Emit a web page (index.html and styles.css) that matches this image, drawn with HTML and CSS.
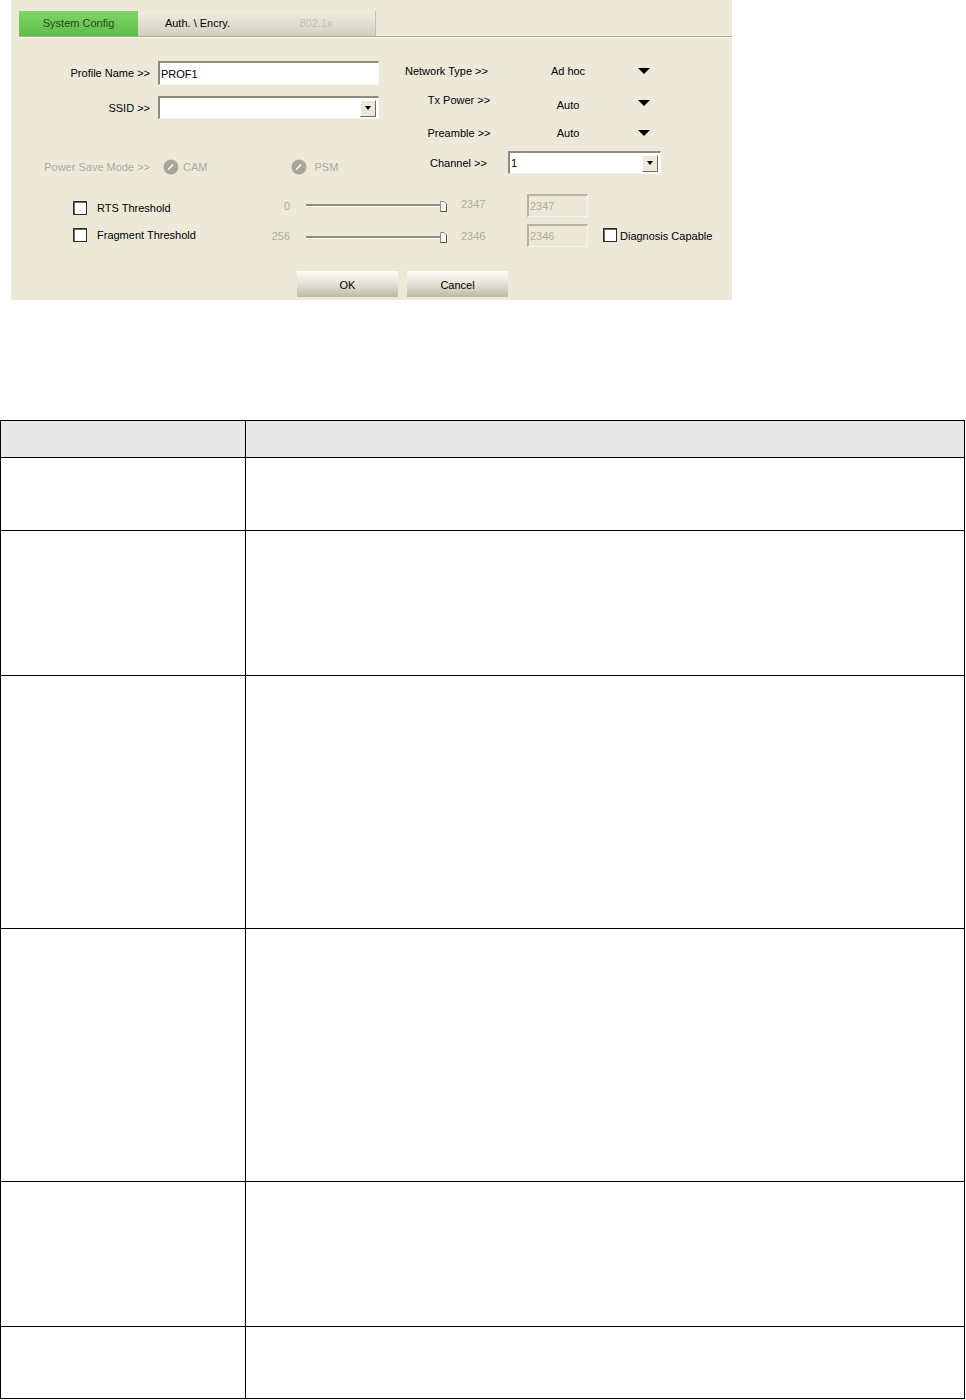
FILE: index.html
```html
<!DOCTYPE html>
<html lang="en">
<head>
    <meta charset="UTF-8">
    <meta name="viewport" content="width=device-width, initial-scale=1.0">
    <title>System Config</title>
    <link rel="stylesheet" href="styles.css">
</head>
<body>
    <div class="panel">
        <div class="tabs">
            <div class="tab tab-on">System Config</div>
            <div class="tab">Auth. \ Encry.</div>
            <div class="tab tab-off">802.1x</div>
        </div>

        <div class="top">
            <div class="left">
                <div class="row r-profile">
                    <span class="lbl">Profile Name &gt;&gt;</span>
                    <div class="textbox wide">PROF1</div>
                </div>
                <div class="row r-ssid">
                    <span class="lbl">SSID &gt;&gt;</span>
                    <div class="textbox wide combo">
                        <span class="combo-text"></span>
                        <span class="combo-btn"><i></i></span>
                    </div>
                </div>
                <div class="row r-power dis">
                    <span class="lbl">Power Save Mode &gt;&gt;</span>
                    <svg class="radio cam" width="16" height="16" viewBox="0 0 16 16"><circle cx="8" cy="8" r="7.5" fill="#a9a696"/><line x1="5.5" y1="10.2" x2="9.8" y2="6" stroke="#fff" stroke-width="1.6" stroke-linecap="round"/></svg>
                    <span class="rtext">CAM</span>
                    <svg class="radio psm" width="16" height="16" viewBox="0 0 16 16"><circle cx="8" cy="8" r="7.5" fill="#a9a696"/><line x1="5.5" y1="10.2" x2="9.8" y2="6" stroke="#fff" stroke-width="1.6" stroke-linecap="round"/></svg>
                    <span class="rtext psm-text">PSM</span>
                </div>
            </div>

            <div class="right">
                <div class="rrow r-net">
                    <span class="rlbl net">Network Type &gt;&gt;</span>
                    <span class="val">Ad hoc</span>
                    <span class="arrow"></span>
                </div>
                <div class="rrow r-tx">
                    <span class="rlbl">Tx Power &gt;&gt;</span>
                    <span class="val">Auto</span>
                    <span class="arrow"></span>
                </div>
                <div class="rrow r-pre">
                    <span class="rlbl">Preamble &gt;&gt;</span>
                    <span class="val">Auto</span>
                    <span class="arrow"></span>
                </div>
                <div class="rrow r-channel">
                    <span class="rlbl ch">Channel &gt;&gt;</span>
                    <div class="textbox combo ch-box">
                        <span class="combo-text">1</span>
                        <span class="combo-btn"><i></i></span>
                    </div>
                </div>
            </div>
        </div>

        <div class="thresh">
            <div class="trow t-rts">
                <span class="check"></span>
                <span class="tlbl">RTS Threshold</span>
                <span class="num">0</span>
                <div class="slider">
                    <div class="track"></div>
                    <svg width="7" height="12" viewBox="0 0 7 12"><path d="M0.5 1.5 H4 L6.5 4 V11.5 H0.5 Z" fill="#f7f6f0" stroke="#8e8c7c"/><path d="M6.5 4 V11.5 H0.5" fill="none" stroke="#55544a"/></svg>
                </div>
                <span class="max">2347</span>
                <div class="textbox small">2347</div>
            </div>
            <div class="trow t-frag">
                <span class="check"></span>
                <span class="tlbl">Fragment Threshold</span>
                <span class="num">256</span>
                <div class="slider">
                    <div class="track"></div>
                    <svg width="7" height="12" viewBox="0 0 7 12"><path d="M0.5 1.5 H4 L6.5 4 V11.5 H0.5 Z" fill="#f7f6f0" stroke="#8e8c7c"/><path d="M6.5 4 V11.5 H0.5" fill="none" stroke="#55544a"/></svg>
                </div>
                <span class="max">2346</span>
                <div class="textbox small">2346</div>
                <span class="check diag"></span>
                <span class="diag-lbl">Diagnosis Capable</span>
            </div>
        </div>

        <div class="buttons">
            <button>OK</button>
            <button>Cancel</button>
        </div>
    </div>

    <table>
        <tr class="head"><td class="c1"></td><td></td></tr>
        <tr class="h1"><td class="c1"></td><td></td></tr>
        <tr class="h2"><td class="c1"></td><td></td></tr>
        <tr class="h3"><td class="c1"></td><td></td></tr>
        <tr class="h3"><td class="c1"></td><td></td></tr>
        <tr class="h2"><td class="c1"></td><td></td></tr>
        <tr class="h4"><td class="c1"></td><td></td></tr>
    </table>
</body>
</html>
```

FILE: styles.css
```css
* {
    box-sizing: border-box;
}

body {
    margin: 0;
    background: #fff;
    font-family: "Liberation Sans", Arial, sans-serif;
    font-size: 11px;
    color: #000;
}

.panel {
    margin-left: 11px;
    width: 721px;
    height: 300px;
    background: #ece9d8;
}

/* tabs */
.tabs {
    display: flex;
    margin-left: 8px;
    padding-top: 11px;
    height: 37px;
    border-bottom: 1px solid #b0ad98;
    box-shadow: 0 1px 0 #fbfaf5;
}

.tab {
    width: 119px;
    height: 25px;
    line-height: 24px;
    text-align: center;
    background: linear-gradient(#efede3, #d3cfbf);
}

.tab:last-child {
    border-right: 1px solid #c4c0ad;
}

.tab-on {
    background: linear-gradient(#7fd567, #5dbd47);
    color: #244d16;
}

.tab-off {
    color: #c2bfb0;
}

/* top block */
.top {
    display: flex;
    gap: 26px;
}

.left {
    width: 368px;
}

.row {
    display: flex;
    align-items: center;
}

.lbl {
    width: 139px;
    margin-right: 8px;
    text-align: right;
}

.r-profile {
    margin-top: 24px;
    height: 24px;
}

.r-ssid {
    margin-top: 11px;
    height: 23px;
}

.r-power {
    margin-top: 38px;
    height: 20px;
}

.dis {
    color: #aeab9c;
}

.r-power .lbl {
    margin-right: 13px;
}

.rtext {
    margin-left: 4px;
}

.radio.psm {
    margin-left: 84px;
}

.psm-text {
    margin-left: 7px;
}

.textbox {
    display: flex;
    align-items: center;
    height: 100%;
    background: #fff;
    border-top: 2px solid #8d8b7f;
    border-left: 2px solid #8d8b7f;
    border-right: 1px solid #f6f5f0;
    border-bottom: 1px solid #f6f5f0;
    padding-left: 1px;
}

.wide {
    width: 221px;
}

.combo {
    justify-content: space-between;
    padding-right: 2px;
}

.combo-btn {
    width: 16px;
    height: 17px;
    display: flex;
    align-items: center;
    justify-content: center;
    background: #ece9d8;
    border-top: 1px solid #fff;
    border-left: 1px solid #fff;
    border-right: 1px solid #6f6d62;
    border-bottom: 1px solid #6f6d62;
}

.combo-btn i {
    width: 0;
    height: 0;
    border-left: 3.5px solid transparent;
    border-right: 3.5px solid transparent;
    border-top: 4px solid #000;
}

/* right block */
.right {
    padding-top: 19px;
}

.rrow {
    display: flex;
    align-items: center;
    height: 31px;
}

.rlbl {
    width: 108px;
    text-align: center;
}

.rlbl.net {
    text-align: left;
}

.r-net {
    padding-bottom: 2px;
}

.r-tx .rlbl {
    margin-bottom: 5px;
}

.r-tx .val {
    margin-top: 4px;
}

.r-pre {
    padding-bottom: 1px;
}

.val {
    width: 110px;
    text-align: center;
}

.arrow {
    margin-left: 15px;
    width: 0;
    height: 0;
    border-left: 6px solid transparent;
    border-right: 6px solid transparent;
    border-top: 6px solid #000;
}

.r-channel {
    height: 27px;
}

.rlbl.ch {
    width: 103px;
    padding-left: 4px;
}

.ch-box {
    width: 153px;
    height: 23px;
}

/* thresholds */
.thresh {
    margin-top: 17px;
    display: flex;
    flex-direction: column;
    gap: 7px;
}

.trow {
    display: flex;
    align-items: center;
    height: 23px;
    padding-left: 62px;
}

.t-rts .check,
.t-rts .tlbl {
    margin-top: 5px;
}

.t-frag .check,
.t-frag .tlbl {
    margin-bottom: 1px;
}

.t-rts .max {
    margin-bottom: 3px;
}

.t-frag .slider {
    margin-top: 3px;
}

.check {
    width: 14px;
    height: 14px;
    background: #fff;
    border: 1px solid #2a2a2a;
    box-shadow: inset 1px 1px 0 #6d6b60;
}

.tlbl {
    width: 153px;
    margin-left: 10px;
}

.num {
    width: 40px;
    text-align: right;
    color: #aeab9c;
}

.slider {
    display: flex;
    align-items: center;
    width: 141px;
    margin-left: 16px;
}

.track {
    flex: 1;
    height: 3px;
    background: #8e8c7c;
    border-bottom: 1px solid #fff;
}

.max {
    width: 66px;
    margin-left: 14px;
    color: #aeab9c;
}

.textbox.small {
    width: 61px;
    background: #ece9d8;
    color: #aeab9c;
    border-top-color: #b6b3a2;
    border-left-color: #b6b3a2;
}

.t-rts .check,
.t-frag .check {
    margin-left: 0;
}

.check.diag {
    margin-left: 15px;
}

.diag-lbl {
    margin-left: 3px;
}

/* buttons */
.buttons {
    display: flex;
    gap: 9px;
    margin-top: 24px;
    padding-left: 286px;
}

button {
    width: 101px;
    height: 26px;
    border: none;
    background: linear-gradient(#fbfbf7, #e8e6db 45%, #bdb9a2);
    font-family: "Liberation Sans", Arial, sans-serif;
    font-size: 11px;
    color: #000;
    padding: 2px 0 0;
}

/* table */
table {
    margin-top: 120px;
    width: 965px;
    border-collapse: collapse;
}

td {
    border: 1px solid #000;
    padding: 0;
}

.c1 {
    width: 245px;
}

.head td {
    height: 37px;
    background: #e8e8e8;
}

.h1 td {
    height: 73px;
}

.h2 td {
    height: 145px;
}

.h3 td {
    height: 253px;
}

.h4 td {
    height: 72px;
}
```
